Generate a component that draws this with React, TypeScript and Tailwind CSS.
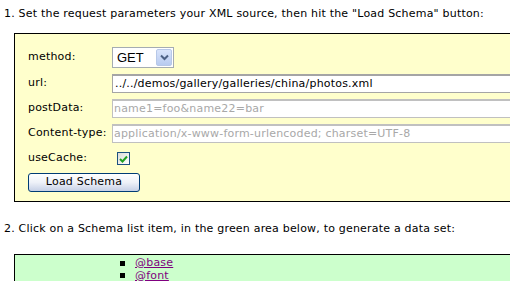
import React from "react";

const V = { fontFamily: '"DejaVu Sans", Verdana, sans-serif' };
const A = { fontFamily: '"Liberation Sans", Arial, sans-serif' };

function Row({ label, children, h, mt }: { label: string; children: React.ReactNode; h: string; mt: string }) {
  return (
    <div className={`flex items-center ${h} ${mt}`}>
      <div className="w-[84px] shrink-0 text-[11px] tracking-[0.2px] text-black">{label}</div>
      {children}
    </div>
  );
}

function Item({ text }: { text: string }) {
  return (
    <li className="flex h-[12.5px] items-center">
      <span className="ml-[105px] h-[5px] w-[5px] bg-black" />
      <span className="ml-[10px] text-[#800080] underline">{text}</span>
    </li>
  );
}

export default function App() {
  return (
    <div className="w-[510px] h-[281px] overflow-hidden bg-white text-black" style={V}>
      <p className="pl-[4px] pt-[7px] text-[11px] leading-[13px] tracking-[0.2px] whitespace-nowrap">
        1. Set the request parameters your XML source, then hit the "Load Schema" button:
      </p>
      <div className="ml-[14px] mt-[13px] w-[560px] border border-black bg-[#ffffcc] pl-[13px] pt-[13px] pb-[9px]">
        <Row label="method:" h="h-[21px]" mt="mt-0">
          <div className="flex h-[21px] w-[62px] items-center justify-between border border-[#a5acb2] bg-white pl-[4px] pr-[1px]">
            <span className="text-[13px] leading-none" style={A}>GET</span>
            <div className="flex h-[17px] w-[16px] items-center justify-center rounded-[2px] border border-[#b7c8e8] bg-gradient-to-b from-[#d9e4fb] to-[#b8cbf0]">
              <svg width="9" height="7" viewBox="0 0 9 7">
                <path d="M1 1.5 L4.5 5 L8 1.5" stroke="#4d6185" strokeWidth="2" fill="none" />
              </svg>
            </div>
          </div>
        </Row>
        <Row label="url:" h="h-[19px]" mt="mt-[6px]">
          <div className="flex h-[19px] w-[430px] items-center border border-[#a5a5a5] border-t-2 bg-white pl-[2px] text-[11px] tracking-[0.2px] whitespace-nowrap">
            ../../demos/gallery/galleries/china/photos.xml
          </div>
        </Row>
        <Row label="postData:" h="h-[19px]" mt="mt-[6px]">
          <div className="flex h-[19px] w-[430px] items-center border border-[#c0c0c0] border-t-2 bg-white pl-[1px] text-[11px] tracking-[0.2px] text-[#a8a8a8] whitespace-nowrap">
            name1=foo&amp;name22=bar
          </div>
        </Row>
        <Row label="Content-type:" h="h-[19px]" mt="mt-[6px]">
          <div className="flex h-[19px] w-[430px] items-center border border-[#c0c0c0] border-t-2 bg-white pl-[1px] text-[11px] tracking-[0.2px] text-[#a8a8a8] whitespace-nowrap">
            application/x-www-form-urlencoded; charset=UTF-8
          </div>
        </Row>
        <Row label="useCache:" h="h-[17px]" mt="mt-[7px]">
          <div className="ml-[5px] flex h-[13px] w-[13px] items-center justify-center border border-[#1c5180] bg-gradient-to-br from-[#dcdcd7] to-white">
            <svg width="9" height="8" viewBox="0 0 9 8">
              <path d="M1 4 L3.5 6.5 L8 1.5" stroke="#21a121" strokeWidth="2" fill="none" />
            </svg>
          </div>
        </Row>
        <div className="mt-[6px] flex h-[19px] w-[112px] items-center justify-center rounded-[3px] border border-[#003c74] bg-gradient-to-b from-white via-[#eef1f8] to-[#c6d0e6] text-[11px] tracking-[0.2px]">
          Load Schema
        </div>
      </div>
      <p className="pl-[4px] pt-[20px] text-[11px] leading-[13px] tracking-[0.2px] whitespace-nowrap">
        2. Click on a Schema list item, in the green area below, to generate a data set:
      </p>
      <div className="ml-[14px] mt-[19px] w-[560px] border border-black bg-[#ccffcc] pt-[2px] pb-[4px]">
        <ul className="text-[11px] tracking-[0.2px] leading-[12.5px]">
          <Item text="@base" />
          <Item text="@font" />
        </ul>
      </div>
    </div>
  );
}
